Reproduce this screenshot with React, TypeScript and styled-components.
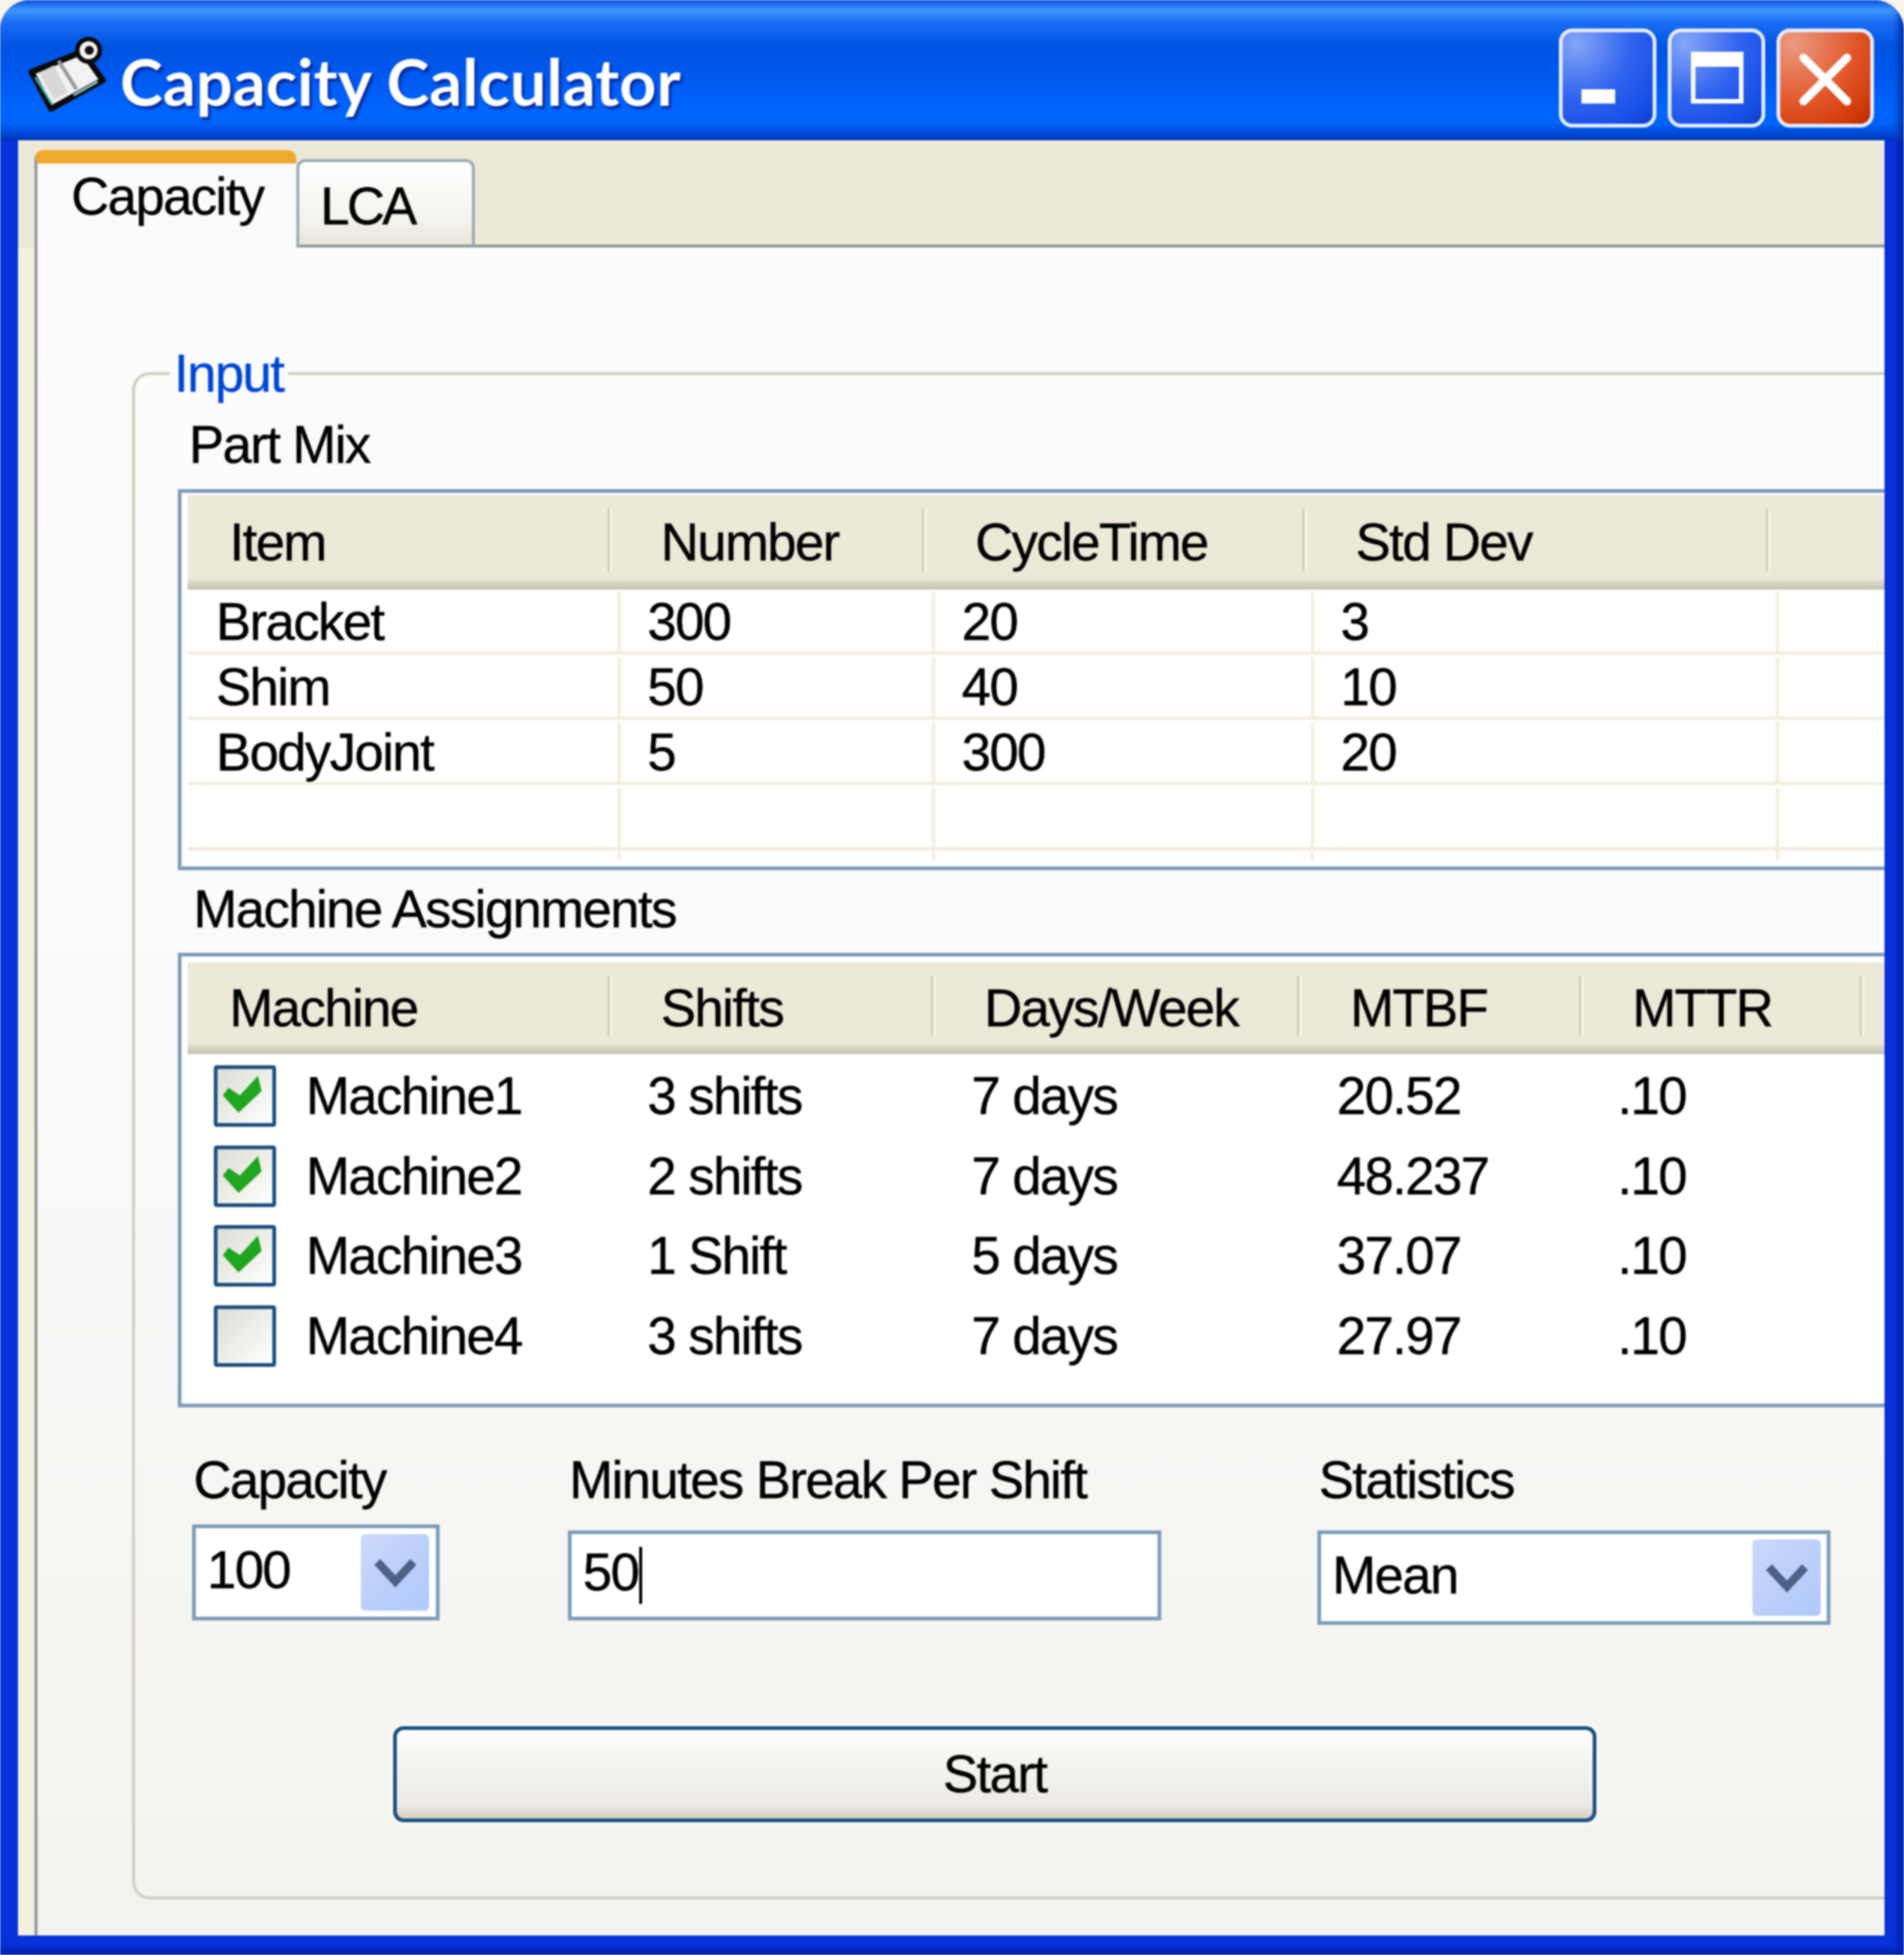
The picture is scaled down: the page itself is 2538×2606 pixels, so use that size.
import React from "react";
import styled, { createGlobalStyle } from "styled-components";

const GlobalStyle = createGlobalStyle`
  html, body {
    margin: 0;
    padding: 0;
    background: #f8f6ea;
  }
`;

const Window = styled.div`
  width: 2538px;
  height: 2606px;
  display: flex;
  flex-direction: column;
  overflow: hidden;
  border-radius: 40px 40px 0 0;
  background: #0831d9;
  box-shadow: inset -9px -9px 9px -2px #0020a8;
  font-family: "Liberation Sans", Arial, sans-serif;
  font-size: 70px;
  letter-spacing: -2px;
  color: #000;
  -webkit-text-stroke: 0.5px currentColor;
  filter: blur(1.1px);
`;

const TitleBar = styled.div`
  height: 187px;
  flex: none;
  display: flex;
  align-items: center;
  padding: 20px 40px 0 38px;
  box-sizing: border-box;
  box-shadow: inset -10px 0 10px -3px #0030a8;
  background: linear-gradient(
    180deg,
    #0a5ae6 0,
    #3f95ff 14px,
    #1a6cf5 30px,
    #0054e3 62px,
    #0058ee 100px,
    #0066ff 150px,
    #0062f8 165px,
    #0040cc 182px,
    #0035b8 187px
  );
`;

const AppIcon = styled.svg`
  width: 104px;
  height: 104px;
  flex: none;
  margin-top: -6px;
`;

const TitleText = styled.div`
  margin: 8px 0 0 18px;
  font-family: Lato, "Liberation Sans", sans-serif;
  font-weight: 700;
  font-size: 86px;
  letter-spacing: 0.3px;
  -webkit-text-stroke: 0;
  color: #fff;
  text-shadow: 3px 4px 3px #0a2a9c;
  flex: 1;
`;

const WinButtons = styled.div`
  display: flex;
  gap: 15px;
`;

const WinButton = styled.div<{ $close?: boolean }>`
  width: 130px;
  height: 132px;
  box-sizing: border-box;
  border: 5px solid #e6ecff;
  border-radius: 18px;
  position: relative;
  background: ${(p) =>
    p.$close
      ? "radial-gradient(circle at 15% 12%, #eb9a80 0, #e2562a 55%, #d03a08 85%, #b02b02 100%)"
      : "radial-gradient(circle at 15% 12%, #86a6f8 0, #2f62ee 50%, #1850e8 80%, #0f3fcc 100%)"};
`;

const MinGlyph = styled.span`
  position: absolute;
  left: 25px;
  top: 76px;
  width: 45px;
  height: 19px;
  background: #fff;
`;

const MaxGlyph = styled.span`
  position: absolute;
  left: 26px;
  top: 26px;
  width: 70px;
  height: 69px;
  box-sizing: border-box;
  border: 6px solid #fff;
  border-top-width: 20px;
`;

const CloseGlyph = styled.svg`
  position: absolute;
  left: 25px;
  top: 28px;
  width: 70px;
  height: 70px;
`;

const Body = styled.div`
  flex: none;
  width: 2488px;
  height: 2393px;
  margin-left: 24px;
  background: #f3f0de;
  overflow: hidden;
  display: flex;
  flex-direction: column;
`;

const TabStrip = styled.div`
  height: 143px;
  flex: none;
  display: flex;
  align-items: flex-end;
  padding-left: 22px;
  background: #ece9d8;
  box-sizing: border-box;
`;

const StripLine = styled.div`
  flex: 1;
  height: 4px;
  background: #919b9c;
`;

const ActiveTab = styled.div`
  box-sizing: border-box;
  flex: none;
  width: 349px;
  height: 130px;
  padding: 9px 0 0 45px;
  line-height: 70px;
  background: #fbfbfd;
  border-radius: 12px 12px 0 0;
  border-left: 4px solid #919b9c;
  border-top: 18px solid #f0a92c;
`;

const IdleTab = styled.div`
  box-sizing: border-box;
  flex: none;
  width: 238px;
  height: 118px;
  padding: 24px 0 0 28px;
  line-height: 70px;
  letter-spacing: -3.5px;
  background: linear-gradient(180deg, #fff 0, #f4f3ee 70%, #e8e6da 100%);
  border: 4px solid #9cacb4;
  border-bottom-color: #919b9c;
  border-radius: 12px 12px 0 0;
`;

const TabPage = styled.div`
  flex: 1;
  margin-left: 22px;
  border-left: 4px solid #919b9c;
  background: linear-gradient(180deg, #fcfcfe 0, #fbfbfb 40%, #f4f3ee 100%);
  overflow: hidden;
`;

const Group = styled.fieldset`
  box-sizing: border-box;
  margin: 126px 0 0 126px;
  padding: 0;
  width: 2600px;
  height: 2076px;
  border: 4px solid #d0d0bf;
  border-radius: 24px;
`;

const GroupTitle = styled.legend`
  margin-left: 46px;
  padding: 0 6px;
  line-height: 84px;
  color: #0046d5;
`;

const SectionLabel = styled.div<{ $left: number; $top: number }>`
  line-height: 70px;
  margin-left: ${(p) => p.$left}px;
  margin-top: ${(p) => p.$top}px;
`;

const ListBox = styled.div<{ $height: number; $top: number; $pad: number }>`
  box-sizing: border-box;
  width: 2500px;
  height: ${(p) => p.$height}px;
  margin: ${(p) => p.$top}px 0 0 57px;
  padding: ${(p) => p.$pad}px 0 0 8px;
  border: 5px solid #7f9db9;
  background: #fff;
`;

const HeaderRow = styled.div<{ $height: number }>`
  display: flex;
  height: ${(p) => p.$height}px;
  box-sizing: border-box;
  background: linear-gradient(180deg, #ece9d8 0, #ece9d8 88%, #d6d2c2 94%, #c6c2b1 100%);
`;

const HeaderCell = styled.div<{ $width: number; $first?: boolean }>`
  position: relative;
  flex: none;
  width: ${(p) => p.$width}px;
  box-sizing: border-box;
  padding-left: ${(p) => (p.$first ? 56 : 65)}px;
  display: flex;
  align-items: center;

  &::after {
    content: "";
    position: absolute;
    right: 0;
    top: 18px;
    bottom: 24px;
    width: 6px;
    background: linear-gradient(90deg, #cfccba 0, #cfccba 50%, #fbfaf4 51%, #f5f4ea 100%);
  }
`;

const Filler = styled.div`
  flex: 1;
`;

const PartRow = styled.div<{ $short?: boolean }>`
  display: flex;
  height: ${(p) => (p.$short ? 12 : 87)}px;
  box-sizing: border-box;
  padding-top: ${(p) => (p.$short ? 0 : 3)}px;
  border-bottom: ${(p) => (p.$short ? "none" : "5px solid #f3f0e2")};
`;

const PartCell = styled.div<{ $width: number; $first?: boolean }>`
  flex: none;
  width: ${(p) => p.$width}px;
  box-sizing: border-box;
  padding-left: ${(p) => (p.$first ? 38 : 35)}px;
  display: flex;
  align-items: center;
  border-right: 5px solid #f3f0e2;
`;

const MachineRows = styled.div`
  margin-top: 3px;
`;

const MachineRow = styled.div`
  display: flex;
  align-items: center;
  height: 106.5px;
`;

const MachineCell = styled.div<{ $width: number }>`
  flex: none;
  width: ${(p) => p.$width}px;
`;

const MachineName = styled.div`
  flex: none;
  width: 613px;
  padding-left: 35px;
  box-sizing: border-box;
  display: flex;
  align-items: center;
  gap: 40px;
`;

const CheckBox = styled.div`
  width: 83px;
  height: 82px;
  flex: none;
  box-sizing: border-box;
  border: 5px solid #1c5180;
  border-radius: 4px;
  background: linear-gradient(135deg, #dcdcd7 0, #f0f0ea 55%, #fff 100%);
`;

const CheckMark = styled.svg`
  display: block;
  width: 73px;
  height: 72px;
`;

const FieldRow = styled.div`
  display: flex;
  align-items: flex-start;
  margin: 62px 0 0 76px;
  height: 228px;
`;

const Field = styled.div<{ $width: number; $gap: number }>`
  width: ${(p) => p.$width}px;
  margin-right: ${(p) => p.$gap}px;
  flex: none;
`;

const FieldLabel = styled.div`
  line-height: 70px;
  padding-left: 2px;
`;

const InputBox = styled.div<{ $height: number; $top: number; $inset: number }>`
  box-sizing: border-box;
  height: ${(p) => p.$height}px;
  margin-top: ${(p) => p.$top}px;
  border: 5px solid #7f9db9;
  background: #fff;
  display: flex;
  align-items: center;
  justify-content: space-between;
  padding: 0 ${(p) => p.$inset}px 0 15px;
`;

const ValueText = styled.span`
  margin-top: -6px;
`;

const Caret = styled.span`
  display: inline-block;
  width: 4px;
  height: 76px;
  margin-left: 1px;
  vertical-align: -18px;
  background: #000;
`;

const ComboArrow = styled.div`
  width: 91px;
  height: 102px;
  flex: none;
  border-radius: 6px;
  background: linear-gradient(135deg, #cdd9fb 0, #bccffa 50%, #b0cafa 100%);
  display: flex;
  align-items: center;
  justify-content: center;
`;

const Chevron = styled.svg`
  width: 60px;
  height: 44px;
`;

const StartButton = styled.div`
  box-sizing: border-box;
  width: 1604px;
  height: 128px;
  margin: 135px 0 0 344px;
  border: 5px solid #1c5180;
  border-radius: 14px;
  box-shadow: 0 0 4px 2px #fff;
  background: linear-gradient(180deg, #ffffff 0, #f5f4f0 35%, #ecebe6 85%, #dcd3c4 97%);
  display: flex;
  align-items: center;
  justify-content: center;
`;

const partColumns = [578, 419, 505, 620];
const parts = [
  ["Bracket", "300", "20", "3"],
  ["Shim", "50", "40", "10"],
  ["BodyJoint", "5", "300", "20"],
  ["", "", "", ""],
];

const machines = [
  { name: "Machine1", on: true, shifts: "3 shifts", days: "7 days", mtbf: "20.52", mttr: ".10" },
  { name: "Machine2", on: true, shifts: "2 shifts", days: "7 days", mtbf: "48.237", mttr: ".10" },
  { name: "Machine3", on: true, shifts: "1 Shift", days: "5 days", mtbf: "37.07", mttr: ".10" },
  { name: "Machine4", on: false, shifts: "3 shifts", days: "7 days", mtbf: "27.97", mttr: ".10" },
];

const ComboButton = () => (
  <ComboArrow>
    <Chevron viewBox="0 0 60 44">
      <path d="M6 8 L30 34 L54 8" fill="none" stroke="#4d6185" strokeWidth="11" />
    </Chevron>
  </ComboArrow>
);

export default function App() {
  return (
    <>
      <GlobalStyle />
      <Window>
        <TitleBar>
          <AppIcon viewBox="0 0 104 104">
            <path d="M4 47 L30 96 L99 58 L72 20 Z" fill="#f2f2f2" stroke="#0a0a0a" strokeWidth="8" strokeLinejoin="round" />
            <path d="M14 48 L34 84 L52 74 L34 38 Z" fill="#d8d8d8" />
            <path d="M40 32 L64 70" stroke="#9a9a9a" strokeWidth="5" />
            <path d="M9 54 L32 91" stroke="#3fb8b0" strokeWidth="3" />
            <path d="M60 78 L92 60" stroke="#8fd0cc" strokeWidth="3" />
            <circle cx="80" cy="18" r="15" fill="#f4f4f4" stroke="#0a0a0a" strokeWidth="6" />
            <circle cx="81" cy="18" r="6" fill="#111" />
          </AppIcon>
          <TitleText>Capacity Calculator</TitleText>
          <WinButtons>
            <WinButton>
              <MinGlyph />
            </WinButton>
            <WinButton>
              <MaxGlyph />
            </WinButton>
            <WinButton $close>
              <CloseGlyph viewBox="0 0 70 70">
                <path d="M6 6 L64 64 M64 6 L6 64" stroke="#fff" strokeWidth="11" strokeLinecap="round" />
              </CloseGlyph>
            </WinButton>
          </WinButtons>
        </TitleBar>
        <Body>
          <TabStrip>
            <ActiveTab>Capacity</ActiveTab>
            <IdleTab>LCA</IdleTab>
            <StripLine />
          </TabStrip>
          <TabPage>
            <Group>
              <GroupTitle>Input</GroupTitle>
              <SectionLabel $left={72} $top={18}>Part Mix</SectionLabel>
              <ListBox $height={508} $top={24} $pad={3}>
                <HeaderRow $height={126}>
                  <HeaderCell $width={566} $first>Item</HeaderCell>
                  <HeaderCell $width={419}>Number</HeaderCell>
                  <HeaderCell $width={507}>CycleTime</HeaderCell>
                  <HeaderCell $width={618}>Std Dev</HeaderCell>
                  <Filler />
                </HeaderRow>
                {parts.map((row, i) => (
                  <PartRow key={i}>
                    {row.map((cell, c) => (
                      <PartCell key={c} $width={partColumns[c]} $first={c === 0}>
                        {cell}
                      </PartCell>
                    ))}
                  </PartRow>
                ))}
                <PartRow $short>
                  {partColumns.map((w, c) => (
                    <PartCell key={c} $width={w} />
                  ))}
                </PartRow>
              </ListBox>
              <SectionLabel $left={78} $top={17}>Machine Assignments</SectionLabel>
              <ListBox $height={606} $top={23} $pad={8}>
                <HeaderRow $height={122}>
                  <HeaderCell $width={566} $first>Machine</HeaderCell>
                  <HeaderCell $width={431}>Shifts</HeaderCell>
                  <HeaderCell $width={488}>Days/Week</HeaderCell>
                  <HeaderCell $width={376}>MTBF</HeaderCell>
                  <HeaderCell $width={374}>MTTR</HeaderCell>
                  <Filler />
                </HeaderRow>
                <MachineRows>
                  {machines.map((m) => (
                    <MachineRow key={m.name}>
                      <MachineName>
                        <CheckBox>
                          {m.on && (
                            <CheckMark viewBox="0 0 73 72">
                              <path
                                d="M9 35 L15 27 L30 37 L53 12 L57 29 L28 56 Z"
                                fill="#1fa51f"
                                stroke="#1fa51f"
                                strokeWidth="3"
                              />
                            </CheckMark>
                          )}
                        </CheckBox>
                        {m.name}
                      </MachineName>
                      <MachineCell $width={432}>{m.shifts}</MachineCell>
                      <MachineCell $width={487}>{m.days}</MachineCell>
                      <MachineCell $width={374}>{m.mtbf}</MachineCell>
                      <MachineCell $width={200}>{m.mttr}</MachineCell>
                    </MachineRow>
                  ))}
                </MachineRows>
              </ListBox>
              <FieldRow>
                <Field $width={330} $gap={171}>
                  <FieldLabel>Capacity</FieldLabel>
                  <InputBox $height={128} $top={24} $inset={9}>
                    <ValueText>100</ValueText>
                    <ComboButton />
                  </InputBox>
                </Field>
                <Field $width={791} $gap={208}>
                  <FieldLabel>Minutes Break Per Shift</FieldLabel>
                  <InputBox $height={120} $top={32} $inset={9}>
                    <ValueText>
                      50
                      <Caret />
                    </ValueText>
                  </InputBox>
                </Field>
                <Field $width={684} $gap={0}>
                  <FieldLabel>Statistics</FieldLabel>
                  <InputBox $height={126} $top={32} $inset={8}>
                    <ValueText>Mean</ValueText>
                    <ComboButton />
                  </InputBox>
                </Field>
              </FieldRow>
              <StartButton>Start</StartButton>
            </Group>
          </TabPage>
        </Body>
      </Window>
    </>
  );
}
